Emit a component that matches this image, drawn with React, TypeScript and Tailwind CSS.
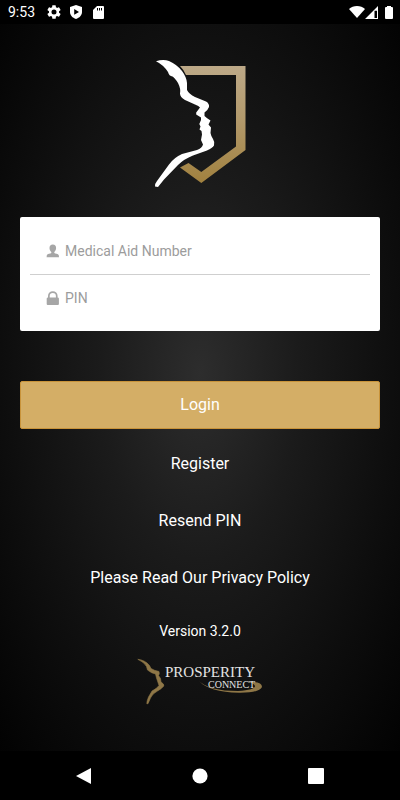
import type { ReactNode } from "react";

const LINKS = [
  { label: "Register", href: "#register" },
  { label: "Resend PIN", href: "#resend-pin" },
  { label: "Please Read Our Privacy Policy", href: "#privacy" },
];

export default function App() {
  return (
    <div className="min-h-screen flex flex-col bg-black text-white font-['Roboto',sans-serif]">
      <StatusBar />
      <main className="grow flex flex-col items-center px-5 pt-[26px] pb-8 bg-[radial-gradient(ellipse_farthest-corner_at_50%_48%,#2d2d2d_0%,#1b1b1b_35%,#0e0e0e_68%,#020202_100%)]">
        <ProfileLogo />
        <form className="w-full mt-[22px]" onSubmit={(e) => e.preventDefault()}>
          <div className="bg-white rounded-xs px-[10px] pt-[11px] pb-[10px]">
            <Field id="member" label="Medical Aid Number" type="text" icon={<PersonIcon />} />
            <div className="h-px bg-[#cfcfcf]" />
            <Field id="pin" label="PIN" type="password" icon={<LockIcon />} />
          </div>
          <button
            type="submit"
            className="w-full h-12 mt-[50px] rounded-xs border border-[#c8933a] bg-[#d4ae66] text-base"
          >
            Login
          </button>
        </form>
        <nav className="mt-[7px] flex flex-col items-center gap-px">
          {LINKS.map((l) => (
            <a key={l.href} href={l.href} className="h-14 flex items-center text-base">
              {l.label}
            </a>
          ))}
        </nav>
        <p className="mt-[15px] text-sm">Version 3.2.0</p>
        <BrandLogo />
      </main>
      <NavBar />
    </div>
  );
}

type FieldProps = { id: string; label: string; type: string; icon: ReactNode };

function Field({ id, label, type, icon }: FieldProps) {
  return (
    <div className="h-[46px] flex items-center gap-[6px] pl-4">
      <label htmlFor={id} aria-label={label}>
        {icon}
      </label>
      <input
        id={id}
        type={type}
        placeholder={label}
        className="grow min-w-0 text-sm text-gray-800 placeholder:text-[#9c9c9c] outline-none"
      />
    </div>
  );
}

function StatusBar() {
  return (
    <header className="h-6 flex items-center justify-between pl-2 pr-[7px]">
      <div className="flex items-center">
        <span className="text-sm">9:53</span>
        <svg className="ml-3 w-[14px] h-[14px]" viewBox="2 2 20 20" fill="currentColor">
          <path d="M19.14 12.94c.04-.3.06-.61.06-.94 0-.32-.02-.64-.07-.94l2.03-1.58a.49.49 0 0 0 .12-.61l-1.92-3.32a.49.49 0 0 0-.59-.22l-2.39.96c-.5-.38-1.03-.7-1.62-.94l-.36-2.54A.48.48 0 0 0 13.92 2.4h-3.84c-.24 0-.43.17-.47.41l-.36 2.54c-.59.24-1.13.57-1.62.94l-2.39-.96a.48.48 0 0 0-.59.22L2.74 8.87c-.12.21-.08.47.12.61l2.03 1.58c-.05.3-.09.63-.09.94s.02.64.07.94l-2.03 1.58a.49.49 0 0 0-.12.61l1.92 3.32c.12.22.37.29.59.22l2.39-.96c.5.38 1.03.7 1.62.94l.36 2.54c.05.24.24.41.48.41h3.84c.24 0 .44-.17.47-.41l.36-2.54c.59-.24 1.13-.56 1.62-.94l2.39.96c.22.08.47 0 .59-.22l1.92-3.32a.49.49 0 0 0-.12-.61zM12 15.6a3.6 3.6 0 1 1 0-7.2 3.6 3.6 0 0 1 0 7.2z" />
        </svg>
        <svg className="ml-[9px] w-3 h-[14px]" viewBox="0 0 12 14" fill="currentColor" fillRule="evenodd">
          <path d="M6 0 12 2v5c0 3.300-2.500 5.800-6 7-3.500-1.200-6-3.700-6-7V2zM4.200 4.100v5.600L9 6.900z" />
        </svg>
        <svg className="ml-[11px] w-[11px] h-[13px]" viewBox="0 0 11 13" fill="currentColor" fillRule="evenodd">
          <path d="M4 0h6a1 1 0 0 1 1 1v11a1 1 0 0 1-1 1H1a1 1 0 0 1-1-1V4zM4 2v2.500h1V2zM6 2v2.500h1V2zM8 2v2.500h1V2z" />
        </svg>
      </div>
      <div className="flex items-center">
        <svg className="w-4 h-3" viewBox="0 0 16 12" fill="currentColor">
          <path d="M8 12 0 3c2-2 5-3 8-3s6 1 8 3z" />
        </svg>
        <svg className="w-[13px] h-[13px]" viewBox="0 0 13 13" fill="currentColor" fillRule="evenodd">
          <path d="M13 0v13H0zM9.500 4.800V12H12V4.800z" />
        </svg>
        <svg className="ml-[7px] w-2 h-[13px]" viewBox="0 0 8 13" fill="currentColor">
          <path d="M2 0h4v1h1a1 1 0 0 1 1 1v10a1 1 0 0 1-1 1H1a1 1 0 0 1-1-1V2a1 1 0 0 1 1-1h1z" />
        </svg>
      </div>
    </header>
  );
}

function NavBar() {
  return (
    <footer className="h-[49px] px-[26px] grid grid-cols-3 place-items-center">
      <button aria-label="Back">
        <svg className="w-4 h-4" viewBox="0 0 16 16" fill="currentColor">
          <path d="M15 0v16L0 8z" />
        </svg>
      </button>
      <button aria-label="Home">
        <svg className="w-4 h-4" viewBox="0 0 16 16" fill="currentColor">
          <circle cx="8" cy="8" r="7.600" />
        </svg>
      </button>
      <button aria-label="Recent apps">
        <svg className="w-4 h-4" viewBox="0 0 16 16" fill="currentColor">
          <rect width="16" height="16" rx="1" />
        </svg>
      </button>
    </footer>
  );
}

function PersonIcon() {
  return (
    <svg className="w-[13px] h-[15px]" viewBox="0 0 13 15" fill="#a6a6a6">
      <path d="M6.800 .5C9 .5 10.100 1.900 10.100 4c0 1.800-.8 3.200-1.800 4v1c.7.600 4 .8 4.500 2.200L13 13.200H.6l.2-2c.5-1.400 3.800-1.600 4.500-2.200V8C4.300 7.200 3.500 5.800 3.500 4 3.500 1.900 4.600.5 6.800.5z" />
    </svg>
  );
}

function LockIcon() {
  return (
    <svg className="w-[13px] h-[15px]" viewBox="0 0 13 15" fill="#a6a6a6">
      <path
        fillRule="evenodd"
        d="M2 6.500V5a4.800 4.800 0 0 1 9.600 0v1.500q1.300 0 1.300 1V13q0 1-1 1H1.700q-1 0-1-1V7.500q0-1 1.300-1zM3.700 6.500h6.200V5a3.100 3.100 0 0 0-6.200 0z"
      />
    </svg>
  );
}

// White profile in front of the gold shield
function ProfileLogo() {
  return (
    <svg className="w-[110px] h-[145px]" viewBox="0 0 110 145" role="img" aria-label="Prosperity">
      <defs>
        <linearGradient id="shield" x1="0" y1="0" x2="0" y2="1">
          <stop offset="0" stopColor="#bda988" />
          <stop offset="0.45" stopColor="#b39a6c" />
          <stop offset="1" stopColor="#a1813f" />
        </linearGradient>
      </defs>
      <path
        fill="url(#shield)"
        d="M35 16H100.500V100L56.300 133 35 117.500 43.500 113 56.300 122 91 96.500V25H41Q39 20 35 16z"
      />
      <path
        fill="#fff"
        d="M11 11.300Q18 9 24 11Q32 14.500 37 21Q41.500 27 42 33L42 40Q44 44 50 47L61 51.500Q64.500 53.500 64 57Q63 60 59.500 62.500L59.500 66Q62 68.500 65.500 70.500L63.500 74.500L66 77.500L65.500 83Q66 86 68 89Q70 92 69 95.500Q67.500 98 62 100.500L48 105.500Q39 109 33 115L19 129.500 13 137 10 136.500Q9.500 134 12 131L24 114.500Q29 107.500 37 104L52 100Q57 98 58 94.500L56 90L57 84.500L56.500 81L54.500 79.500L55.500 76.500L54.300 74L56 70V67.500L51.200 64.500V62.500L55 57.500Q54 56 50 54.500L40 50Q35 47 35 43.500Q36 39 33 33Q30 28 27.500 26.500Q24 26 23 22Q18.500 15 11 11.300z"
      />
    </svg>
  );
}

function BrandLogo() {
  return (
    <svg className="mt-[9px] w-[150px] h-[60px]" viewBox="0 0 150 60" role="img" aria-label="Prosperity Connect">
      <path
        fill="#8f7747"
        stroke="#8f7747"
        strokeWidth="0.600"
        strokeLinejoin="round"
        d="M12.800 9.300Q20 10 24.500 15.500L26 18.500Q29 20.500 34 21.500Q34.800 23.500 33.500 25.500L35.500 28.500 36 32Q39.300 34 38.800 36Q37 38.500 32.500 41Q27.500 43.500 25.500 48L23 53.700H21.800Q21.800 51 23.500 47L27 41Q32 38.500 34 35.500L32.500 31 31.500 28 30.500 24Q26 23 22.500 20L21.500 16.500Q19 12 12.800 9.300z"
      />
      <text x="40" y="27" fontSize="15" fill="#e4e4e4" fontFamily="'Liberation Serif', serif">
        PROSPERITY
      </text>
      <path
        fill="#8f7747"
        d="M74 31Q84 41 113 41Q130 40 130 36Q129 33 123 32Q137 31 137 37Q134 43 114 42.800Q84 42 74 31z"
      />
      <text x="83" y="38" fontSize="10" fill="#e4e4e4" fontFamily="'Liberation Serif', serif">
        CONNECT
      </text>
    </svg>
  );
}
